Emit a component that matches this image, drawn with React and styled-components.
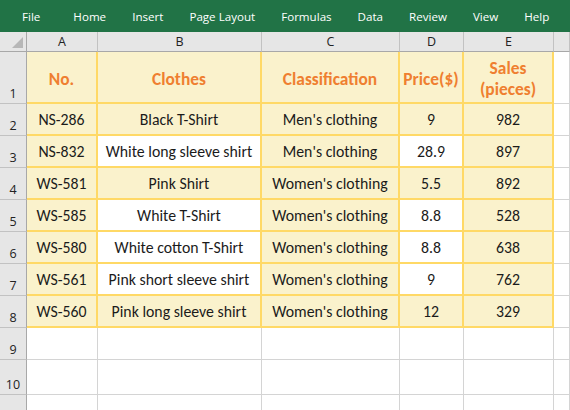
import React from "react";
import styled, { createGlobalStyle } from "styled-components";

const Global = createGlobalStyle`
  html, body { margin: 0; padding: 0; background: #fff; }
  body { width: 570px; height: 410px; overflow: hidden; }
`;

const Page = styled.div`
  width: 570px;
  height: 410px;
  overflow: hidden;
  display: flex;
  flex-direction: column;
`;

const Ribbon = styled.nav`
  height: 32px;
  flex: none;
  background: #217346;
  display: flex;
  align-items: center;
  padding-left: 8px;
  font-family: "Open Sans", "Noto Sans", sans-serif;
  font-size: 11.6px;
  color: #fff;
`;

const Tab = styled.span`
  padding: 0 ${(p) => (p.$first ? "20px" : "13px")} 0 ${(p) => (p.$first ? "14px" : "13px")};
  white-space: nowrap;
`;

const Sheet = styled.div`
  display: grid;
  grid-template-columns: 27px 71px 164px 138px 64px 90px 1fr;
  grid-template-rows: 20px 52px repeat(8, 32px) 35px 32px;
  font-family: "Carlito", "Lato", sans-serif;
  font-size: 15.8px;
  color: #1b1b1b;
`;

const Corner = styled.div`
  background: #e6e6e6;
  border-right: 1px solid #a8a8a8;
  border-bottom: 1px solid #a8a8a8;
  box-sizing: border-box;
  position: relative;
  &::after {
    content: "";
    position: absolute;
    right: 3px;
    bottom: 3px;
    width: 0;
    height: 0;
    border-left: 11px solid transparent;
    border-bottom: 11px solid #b7b7b7;
  }
`;

const ColHead = styled.div`
  background: #e6e6e6;
  border-right: 1px solid #c2c2c2;
  border-bottom: 1px solid #a8a8a8;
  box-sizing: border-box;
  display: flex;
  align-items: center;
  justify-content: center;
  font-family: "Open Sans", "Noto Sans", sans-serif;
  font-size: 12.5px;
  color: #222;
`;

const RowHead = styled.div`
  background: #e6e6e6;
  border-right: 1px solid #a8a8a8;
  border-bottom: 1px solid #c2c2c2;
  box-sizing: border-box;
  display: flex;
  align-items: flex-end;
  justify-content: center;
  padding-bottom: 1px;
  font-family: "Open Sans", "Noto Sans", sans-serif;
  font-size: 12.5px;
  color: #222;
`;

const Cell = styled.div`
  box-sizing: border-box;
  border-right: ${(p) => (p.$data ? "2px solid #ffd966" : "1px solid #d4d4d4")};
  border-bottom: ${(p) => (p.$data ? "2px solid #ffd966" : "1px solid #d4d4d4")};
  background: ${(p) => (p.$fill ? "#faf2cc" : "#fff")};
  display: flex;
  align-items: center;
  justify-content: center;
  text-align: center;
  white-space: nowrap;
  line-height: 1.2;
  padding-top: 3px;
`;

const HeadCell = styled(Cell)`
  color: #ef7f30;
  font-weight: bold;
  font-size: 17.4px;
  white-space: normal;
  line-height: 21px;
  padding-top: 4px;
`;

const tabs = ["File", "Home", "Insert", "Page Layout", "Formulas", "Data", "Review", "View", "Help"];
const cols = ["A", "B", "C", "D", "E", ""];

const headers = ["No.", "Clothes", "Classification", "Price($)", "Sales\n(pieces)"];

// each row: five values, then which of the five cells are filled
const rows = [
  ["NS-286", "Black T-Shirt", "Men's clothing", "9", "982", [1, 1, 1, 1, 1]],
  ["NS-832", "White long sleeve shirt", "Men's clothing", "28.9", "897", [1, 0, 1, 0, 1]],
  ["WS-581", "Pink Shirt", "Women's clothing", "5.5", "892", [1, 1, 1, 1, 1]],
  ["WS-585", "White T-Shirt", "Women's clothing", "8.8", "528", [1, 0, 1, 0, 1]],
  ["WS-580", "White cotton T-Shirt", "Women's clothing", "8.8", "638", [1, 0, 1, 0, 1]],
  ["WS-561", "Pink short sleeve shirt", "Women's clothing", "9", "762", [1, 0, 1, 0, 1]],
  ["WS-560", "Pink long sleeve shirt", "Women's clothing", "12", "329", [1, 1, 1, 1, 1]],
];

export default function App() {
  return (
    <Page>
      <Global />
      <Ribbon>
        {tabs.map((t, i) => (
          <Tab key={t} $first={i === 0}>
            {t}
          </Tab>
        ))}
      </Ribbon>
      <Sheet>
        <Corner />
        {cols.map((c, i) => (
          <ColHead key={i}>{c}</ColHead>
        ))}

        <RowHead>1</RowHead>
        {headers.map((h, i) => (
          <HeadCell key={i} $data $fill>
            {h.split("\n").map((line, j) => (
              <React.Fragment key={j}>
                {j > 0 && <br />}
                {line}
              </React.Fragment>
            ))}
          </HeadCell>
        ))}
        <Cell />

        {rows.map((r, ri) => (
          <React.Fragment key={ri}>
            <RowHead>{ri + 2}</RowHead>
            {r.slice(0, 5).map((v, ci) => (
              <Cell key={ci} $data $fill={r[5][ci] === 1}>
                {v}
              </Cell>
            ))}
            <Cell />
          </React.Fragment>
        ))}

        {[9, 10, 11].map((n) => (
          <React.Fragment key={n}>
            <RowHead>{n}</RowHead>
            {[0, 1, 2, 3, 4, 5].map((c) => (
              <Cell key={c} />
            ))}
          </React.Fragment>
        ))}
      </Sheet>
    </Page>
  );
}
